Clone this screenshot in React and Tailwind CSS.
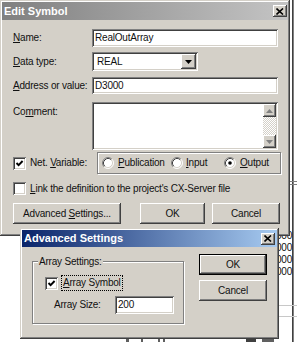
import React from "react";

const SUNKEN =
  "bg-white shadow-[inset_1px_1px_0_#808080,inset_-1px_-1px_0_#ffffff,inset_2px_2px_0_#404040,inset_-2px_-2px_0_#d4d0c8]";
const RAISED =
  "bg-[#d4d0c8] shadow-[inset_-1px_-1px_0_#404040,inset_1px_1px_0_#ffffff,inset_-2px_-2px_0_#808080,inset_2px_2px_0_#d4d0c8]";
const FRAME =
  "bg-[#d4d0c8] shadow-[inset_-1px_-1px_0_#404040,inset_1px_1px_0_#d4d0c8,inset_-2px_-2px_0_#808080,inset_2px_2px_0_#ffffff]";

function CheckBox({ checked }) {
  return (
    <div className={`w-[13px] h-[13px] shrink-0 flex items-center justify-center ${SUNKEN}`}>
      {checked && (
        <svg width="9" height="9" viewBox="0 0 9 9">
          <path d="M1.5 4 L3.6 6.2 L7.6 2" stroke="#000" strokeWidth="1.9" fill="none" />
        </svg>
      )}
    </div>
  );
}

function Radio({ checked }) {
  return (
    <svg width="12" height="12" viewBox="0 0 12 12" className="shrink-0">
      <circle cx="6" cy="6" r="5" fill="#fff" />
      <path d="M2.11 9.89 A5.5 5.5 0 0 1 9.89 2.11" stroke="#808080" fill="none" />
      <path d="M9.89 2.11 A5.5 5.5 0 0 1 2.11 9.89" stroke="#ffffff" fill="none" />
      <path d="M2.82 9.18 A4.5 4.5 0 0 1 9.18 2.82" stroke="#404040" fill="none" />
      <path d="M9.18 2.82 A4.5 4.5 0 0 1 2.82 9.18" stroke="#d4d0c8" fill="none" />
      {checked && <circle cx="6" cy="6" r="1.8" fill="#000" />}
    </svg>
  );
}

function CloseBtn() {
  return (
    <div className={`w-[14px] h-[12px] flex items-center justify-center ${RAISED}`}>
      <svg width="8" height="7" viewBox="0 0 8 7">
        <path d="M0.5 0.5 L7 6.5 M7 0.5 L0.5 6.5" stroke="#000" strokeWidth="1.6" />
      </svg>
    </div>
  );
}

function Arrow({ up }) {
  return (
    <svg width="7" height="4" viewBox="0 0 7 4">
      {up ? (
        <path d="M3.5 0 L7 4 L0 4 Z" fill="#808080" />
      ) : (
        <path d="M0 0 L7 0 L3.5 4 Z" fill="#808080" />
      )}
    </svg>
  );
}

function Btn({ children, className = "" }) {
  return (
    <div className={`flex items-center justify-center ${RAISED} ${className}`}>{children}</div>
  );
}

export default function App() {
  return (
    <div className="relative w-[297px] h-[342px] overflow-hidden bg-white text-[#111] text-[10px] tracking-[-0.2px] font-['Liberation_Sans',Arial,sans-serif] leading-none select-none">
      {/* background spreadsheet remnants */}
      <div className="absolute left-[292px] top-0 w-px h-[342px] bg-[#404040]" />
      <div className="absolute left-[293px] top-0 w-px h-[342px] bg-[#808080]" />
      <div className="absolute left-[288px] top-[181px] w-[9px] h-px bg-[#808080]" />
      <div className="absolute left-[288px] top-[184px] w-[9px] h-px bg-[#808080]" />
      <div className="absolute left-[250px] top-[305px] w-[47px] h-px bg-[#c8c8c8]" />
      <div className="absolute left-[250px] top-[316px] w-[47px] h-px bg-[#c8c8c8]" />
      <div className="absolute left-[240px] top-[230px] w-[52px] flex flex-col items-end text-[10px]">
        <div className="h-[12px] flex items-center">D3000</div>
        <div className="h-[12px] flex items-center">D3000</div>
        <div className="h-[12px] flex items-center">D3000</div>
        <div className="h-[12px] flex items-center">D3000</div>
      </div>
      <div className="absolute left-[126px] top-[339px] w-[3px] h-[3px] bg-[#606060]" />
      <div className="absolute left-[141px] top-[339px] w-[2px] h-[3px] bg-[#606060]" />
      <div className="absolute left-[158px] top-[339px] w-[2px] h-[3px] bg-[#606060]" />
      <div className="absolute left-[163px] top-[339px] w-[2px] h-[3px] bg-[#606060]" />
      <div className="absolute left-[246px] top-[339px] w-[10px] h-[3px] bg-[#404040]" />
      <div className="absolute left-[262px] top-[339px] w-[12px] h-[3px] bg-[#606060]" />

      {/* Edit Symbol window */}
      <div className={`absolute left-0 top-0 w-[290px] h-[236px] p-[2px] ${FRAME}`}>
        <div className="h-[18px] flex items-center justify-between pl-[2px] pr-[1px] bg-[linear-gradient(to_right,#808080,#c4c4c4)]">
          <span className="text-white font-bold text-[11px] tracking-normal">Edit Symbol</span>
          <CloseBtn />
        </div>
        <div className="flex flex-col pl-[11px]">
          <div className="mt-[9px] flex h-[18px] items-center">
            <span className="w-[79px]">
              <span className="underline">N</span>ame:
            </span>
            <div className={`w-[186px] h-[18px] flex items-center pl-[3px] ${SUNKEN}`}>RealOutArray</div>
          </div>
          <div className="mt-[5px] flex h-[19px] items-center">
            <span className="w-[79px]">
              <span className="underline">D</span>ata type:
            </span>
            <div className={`w-[106px] h-[19px] flex items-center justify-between p-[2px] ${SUNKEN}`}>
              <span className="pl-[3px]">REAL</span>
              <Btn className="w-[15px] h-[15px]">
                <svg width="7" height="4" viewBox="0 0 7 4">
                  <path d="M0 0 L7 0 L3.5 4 Z" fill="#000" />
                </svg>
              </Btn>
            </div>
          </div>
          <div className="mt-[6px] flex h-[17px] items-center">
            <span className="w-[79px]">
              <span className="underline">A</span>ddress or value:
            </span>
            <div className={`w-[186px] h-[17px] flex items-center pl-[3px] ${SUNKEN}`}>D3000</div>
          </div>
          <div className="mt-[8px] flex h-[48px] items-start">
            <span className="w-[79px] pt-[5px]">
              Co<span className="underline">m</span>ment:
            </span>
            <div className={`w-[186px] h-[48px] flex justify-end p-[2px] ${SUNKEN}`}>
              <div className="w-[13px] h-full flex flex-col justify-between bg-[repeating-conic-gradient(#ffffff_0%_25%,#d4d0c8_0%_50%)] bg-[length:2px_2px]">
                <Btn className="w-[13px] h-[13px]">
                  <Arrow up />
                </Btn>
                <Btn className="w-[13px] h-[13px]">
                  <Arrow />
                </Btn>
              </div>
            </div>
          </div>
          <div className="mt-[2px] flex h-[22px] items-center">
            <CheckBox checked />
            <span className="ml-[4px] w-[67px]">
              Net. <span className="underline">V</span>ariable:
            </span>
            <div className="w-[184px] h-[22px] flex items-center border border-[#808080] shadow-[1px_1px_0_#ffffff,inset_1px_1px_0_#ffffff] pl-[4px]">
              <div className="w-[69px] flex items-center gap-[4px]">
                <Radio />
                <span>
                  <span className="underline">P</span>ublication
                </span>
              </div>
              <div className="w-[53px] flex items-center gap-[3px]">
                <Radio />
                <span>
                  <span className="underline">I</span>nput
                </span>
              </div>
              <div className="flex items-center gap-[4px]">
                <Radio checked />
                <span>
                  <span className="underline">O</span>utput
                </span>
              </div>
            </div>
          </div>
          <div className="mt-[8px] flex h-[13px] items-center">
            <CheckBox />
            <span className="ml-[4px]">
              <span className="underline">L</span>ink the definition to the project's CX-Server file
            </span>
          </div>
          <div className="mt-[8px] flex h-[21px] items-center">
            <Btn className="w-[108px] h-[21px]">
              <span>
                Advanced <span className="underline">S</span>ettings...
              </span>
            </Btn>
            <Btn className="ml-[19px] w-[65px] h-[21px]">OK</Btn>
            <Btn className="ml-[7px] w-[68px] h-[21px]">Cancel</Btn>
          </div>
        </div>
      </div>

      {/* Advanced Settings window */}
      <div className={`absolute left-[20px] top-[228px] w-[259px] h-[111px] p-[2px] ${FRAME}`}>
        <div className="h-[17px] flex items-center justify-between pl-[2px] pr-[2px] bg-[linear-gradient(to_right,#0a246a,#a6caf0)]">
          <span className="text-white font-bold text-[11px] tracking-normal">Advanced Settings</span>
          <CloseBtn />
        </div>
        <div className="flex pl-[10px]">
          <div className="relative mt-[14px] w-[152px] h-[63px] border border-[#808080] shadow-[1px_1px_0_#ffffff,inset_1px_1px_0_#ffffff] flex flex-col pl-[12px] pt-[13px]">
            <span className="absolute left-[5px] -top-[5px] bg-[#d4d0c8] px-[1px]">Array Settings:</span>
            <div className="flex h-[16px] items-center">
              <CheckBox checked />
              <span className="ml-[3px] h-[16px] flex items-center px-[1px] border border-dotted border-black">
                <span className="underline">A</span>rray Symbol
              </span>
            </div>
            <div className="mt-[5px] flex h-[18px] items-center">
              <span className="ml-[9px] w-[61px]">Array Size:</span>
              <div className={`w-[59px] h-[18px] flex items-center pl-[3px] ${SUNKEN}`}>200</div>
            </div>
          </div>
          <div className="ml-[15px] mt-[7px] flex flex-col gap-[5px]">
            <div className="w-[68px] h-[21px] border border-black">
              <Btn className="w-full h-full">OK</Btn>
            </div>
            <Btn className="w-[68px] h-[21px]">Cancel</Btn>
          </div>
        </div>
      </div>
    </div>
  );
}
